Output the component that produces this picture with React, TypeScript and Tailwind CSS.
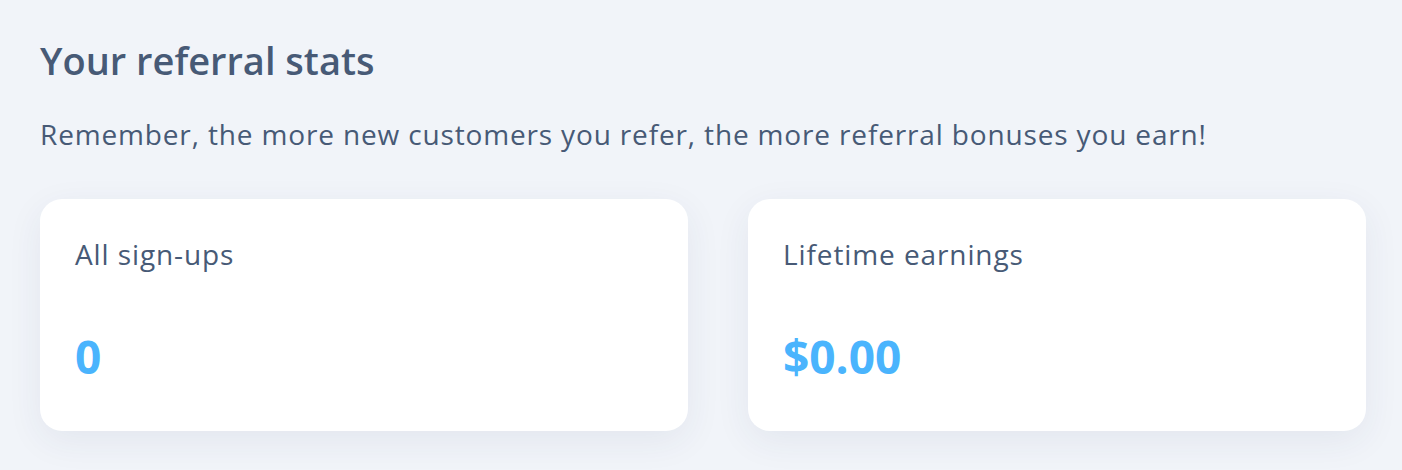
const stats = [
  { label: 'All sign-ups', value: '0' },
  { label: 'Lifetime earnings', value: '$0.00' },
];

function StatCard({ label, value }: { label: string; value: string }) {
  return (
    <div className="h-[232px] rounded-[22px] bg-white pl-[35px] pt-[35px] shadow-[0_10px_36px_rgba(40,60,100,0.07)]">
      <p className="text-[28px] leading-[40px] tracking-[0.9px] text-[#475a76]">{label}</p>
      <p className="mt-[55px] text-[46px] font-bold leading-[54px] text-[#4ab4fd]">{value}</p>
    </div>
  );
}

export default function App() {
  return (
    <div
      className="min-h-[470px] w-full bg-[#f1f4f9] px-[40px] pt-[35px]"
      style={{ fontFamily: '"Open Sans", "Noto Sans", sans-serif' }}
    >
      <h2 className="text-[38px] font-semibold leading-[50px] text-[#475a76]">Your referral stats</h2>
      <p className="mt-[29px] text-[28px] leading-[40px] tracking-[0.85px] text-[#475a76]">
        Remember, the more new customers you refer, the more referral bonuses you earn!
      </p>
      <div className="mt-[45px] grid grid-cols-[648px_618px] gap-[60px]">
        {stats.map((s) => (
          <StatCard key={s.label} label={s.label} value={s.value} />
        ))}
      </div>
    </div>
  );
}
